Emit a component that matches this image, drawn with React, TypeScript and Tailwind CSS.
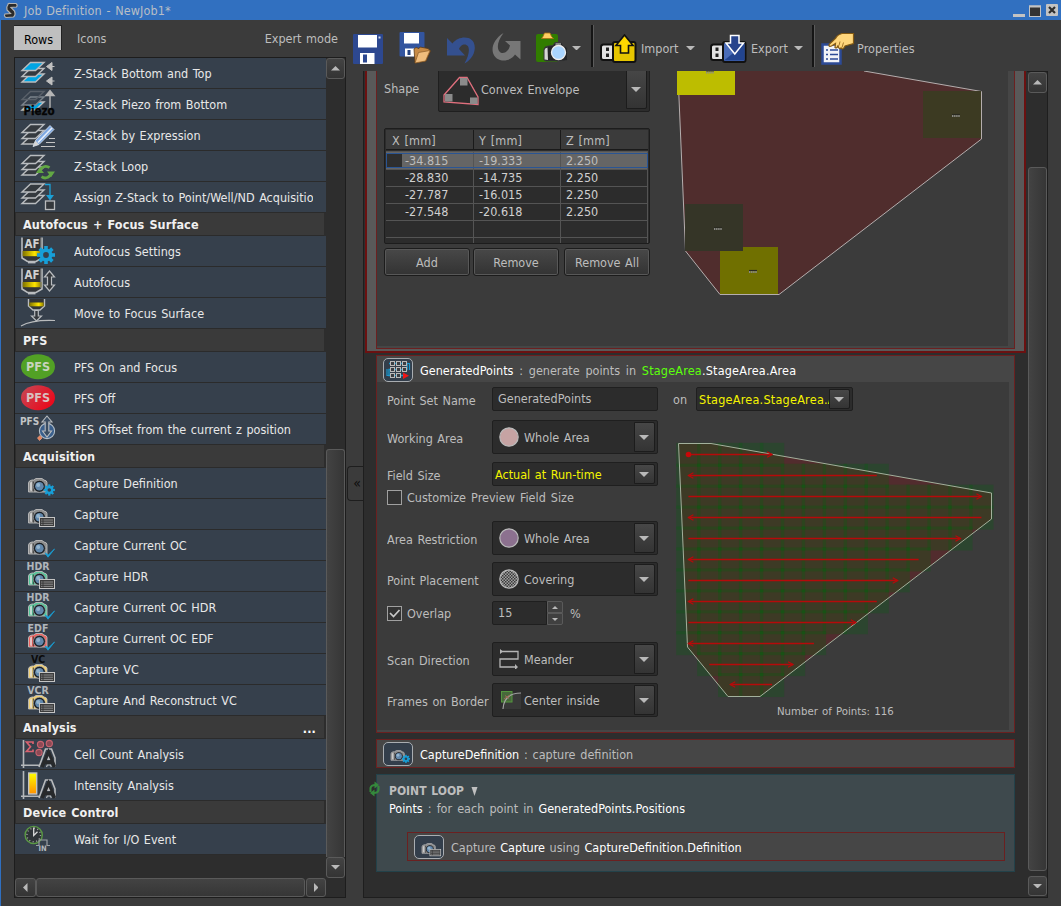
import React from "react";

type Kids = { children?: React.ReactNode };

const STROKE = "#b9bcbf";

/* ---------- shared glyphs ---------- */

function Gear({ cx, cy, r, hole = "#36404c" }: { cx: number; cy: number; r: number; hole?: string }) {
  return (
    <g transform={`translate(${cx} ${cy})`}>
      {[0, 45, 90, 135].map((a) => (
        <rect key={a} x={-r * 0.2} y={-r} width={r * 0.4} height={r * 2} fill="#179fd8" transform={`rotate(${a})`} />
      ))}
      <circle r={r * 0.72} fill="#179fd8" />
      <circle r={r * 0.32} fill={hole} />
    </g>
  );
}

function Layer({ y, fill = "none", stroke = STROKE }: { y: number; fill?: string; stroke?: string }) {
  return <path d={`M10.5 ${y}H24L15.5 ${y + 8}H2Z`} fill={fill} stroke={stroke} strokeWidth="1.4" />;
}

function TableBadge({ x, y }: { x: number; y: number }) {
  return (
    <g>
      <rect x={x + 0.5} y={y + 0.5} width="15" height="9" fill="#3c3c3c" stroke="#c4c4c4" />
      <path d={`M${x + 2} ${y + 3}h12M${x + 2} ${y + 5.2}h12M${x + 2} ${y + 7.4}h12`} stroke="#8c8c8c" strokeWidth="1" />
      <path d={`M${x + 4} ${y + 1.5}v7`} stroke="#333" strokeWidth="0.8" />
    </g>
  );
}

function Check({ x, y }: { x: number; y: number }) {
  return <path d={`M${x} ${y + 4.5}l3 4.2 6.5 -8.2 -6 5.8z`} fill="#189fd6" stroke="#189fd6" strokeWidth="0.8" />;
}

function CameraBody({ tint = "#8d8d8d" }: { tint?: string }) {
  return (
    <g transform="translate(0 0.5)">
      <path d="M8.5 23.5V14.5Q8.7 12 12 11.5H13.5L16 10H22L24 11.5Q27 12 27 14V23.5Z" fill={tint} stroke="#bdbdbd" strokeWidth="0.9" />
      <path d="M10 22V14.5Q10.4 13 12 13V22.5Z" fill="#e2e2e2" opacity="0.75" />
      <path d="M13.3 13V23" stroke="#333" strokeWidth="0.9" />
      <circle cx="19.4" cy="17.8" r="6" fill="#1b1f24" stroke="#b0b0b0" strokeWidth="0.6" />
      <circle cx="19.4" cy="17.8" r="4.3" fill="#6288ac" />
      <circle cx="18.2" cy="16.4" r="2" fill="#94b5cf" />
    </g>
  );
}

function Camera({ badge, tint, label, labelFill = "#b0b5ba" }: { badge: "gear" | "table" | "check"; tint?: string; label?: string; labelFill?: string }) {
  return (
    <g>
      <CameraBody tint={tint} />
      {badge === "gear" && <Gear cx={29.3} cy={22} r={5.6} />}
      {badge === "table" && <TableBadge x={19} y={18} />}
      {badge === "check" && <Check x={25} y={18.5} />}
      {label && (
        <text x="18" y="9" textAnchor="middle" fontSize="10.5" fontWeight="700" fill={labelFill} className="font-['DejaVu_Sans_Condensed','DejaVu_Sans',sans-serif]">
          {label}
        </text>
      )}
    </g>
  );
}

function Objective() {
  return (
    <g>
      <path d="M2 1.500V22L7.500 25.500H16L22 22V1.500" fill="#333537" stroke={STROKE} strokeWidth="1.600" />
      <path d="M8 26.500H15.500" stroke={STROKE} strokeWidth="1.800" />
      <rect x="2.600" y="15" width="18.800" height="5.200" fill="url(#band)" />
      <path d="M20.800 1.500V21" stroke="#77797b" strokeWidth="1" />
      <text x="12" y="12" textAnchor="middle" fontSize="11.500" fontWeight="700" fill="#d0d0d0" className="font-['DejaVu_Sans_Condensed','DejaVu_Sans',sans-serif]">
        AF
      </text>
    </g>
  );
}

function DoubleArrow({ x, y1, y2 }: { x: number; y1: number; y2: number }) {
  return (
    <path
      d={`M${x} ${y1}L${x + 5} ${y1 + 6}H${x + 2}V${y2 - 6}H${x + 5}L${x} ${y2}L${x - 5} ${y2 - 6}H${x - 2}V${y1 + 6}H${x - 5}Z`}
      fill="#34383c"
      stroke={STROKE}
      strokeWidth="1.2"
    />
  );
}

function Axis() {
  return <path d="M3.5 1V29M1 26.3H20" stroke="#b4b7ba" strokeWidth="1.6" fill="none" />;
}

function BigA() {
  return (
    <g>
      <path d="M19 28L25.500 10H31.500L35 19V28" fill="none" stroke="#b9bbbd" strokeWidth="1.600" />
      <path d="M22 28L28.500 13.500L34.500 28M24.500 23.500H33" fill="none" stroke="#27292b" strokeWidth="3.600" />
      <path d="M28.500 17L27 21H30.300Z" fill="#b9bbbd" />
      <path d="M26.500 28L27.300 26H30.500L31.300 28" fill="none" stroke="#b9bbbd" strokeWidth="1.200" />
    </g>
  );
}

function RowIcon({ kind }: { kind: string }) {
  const bold = "font-['DejaVu_Sans_Condensed','DejaVu_Sans',sans-serif] font-bold";
  const body: Record<string, React.ReactNode> = {
    zBottomTop: (
      <>
        <Layer y={16} fill="#00a5e3" /><Layer y={10.5} fill="#353a3f" /><Layer y={4.5} fill="#00a5e3" />
        <path d="M26.5 8.5L32 4.5V12.5ZM32 8.5H34.5M26.5 23L32 19V27ZM32 23H34.5" fill="#c0c0c0" stroke="#c0c0c0" />
      </>
    ),
    zPiezo: (
      <>
        <Layer y={13} fill="#00a5e3" /><Layer y={8} fill="#36404c" stroke="#7b838b" /><Layer y={2.5} stroke="#596069" />
        <path d="M30 19V4M26 6.5L30 1.5L34 6.5Z" stroke="#b5b5b5" strokeWidth="1.4" fill="#b5b5b5" />
        <text x="3.5" y="26.2" fontSize="11.5" className={bold} fill="#050505" stroke="#050505" strokeWidth="0.3" textLength="31">Piezo</text>
      </>
    ),
    zExpr: (
      <>
        <Layer y={16} fill="#353a3f" /><Layer y={10.5} fill="#353a3f" /><Layer y={4.5} fill="#353a3f" />
        <path d="M29 18.5H35M26 22.5H35M21 26.5H35" stroke="#c5c5c5" strokeWidth="1.2" />
        <path d="M13 26.5L15.5 20.5L30 5.5L34 9.5L19 24.5Z" fill="#7fa9e2" stroke="#dbe6f5" strokeWidth="0.8" />
        <path d="M18 22.5L32 8" stroke="#e8f0fa" strokeWidth="1.6" />
        <path d="M13 26.5L15.5 20.5L19 24.5Z" fill="#d5d5d5" />
      </>
    ),
    zLoop: (
      <>
        <Layer y={16} fill="#353a3f" /><Layer y={10.5} fill="#353a3f" /><Layer y={4.5} fill="#353a3f" />
        <path d="M19.5 21A6.3 6.3 0 0 1 29.5 16.7M31.500 21A6.3 6.3 0 0 1 21.5 25.700" fill="none" stroke="#62a744" strokeWidth="2.800" />
        <path d="M16 22L19.5 16.500L24 22ZM27 20.5L35 20.5L31.2 26Z" fill="#62a744" />
      </>
    ),
    zAssign: (
      <>
        <Layer y={13.5} fill="#353a3f" /><Layer y={8} fill="#353a3f" /><Layer y={2} fill="#353a3f" />
        <path d="M25 2.5H30V14" fill="none" stroke="#1ba0d6" strokeWidth="1.3" />
        <path d="M26 13H34L30 18.5Z" fill="#1ba0d6" />
        <rect x="25.5" y="19" width="9" height="8.5" fill="#34383c" stroke="#b9bbbd" strokeWidth="1.3" />
      </>
    ),
    afSet: (<><Objective /><Gear cx={26} cy={19} r={9} /></>),
    af: (<><Objective /><DoubleArrow x={29.5} y1={4} y2={24} /></>),
    moveFocus: (
      <>
        <path d="M8.5 1V8L13 12H20L24.5 8V1" fill="#333537" stroke={STROKE} strokeWidth="1.4" />
        <rect x="9.3" y="4.5" width="14.4" height="3.8" fill="url(#band)" />
        <path d="M14.7 12.5V18H11.5L16.5 23L21.5 18H18.3V12.5Z" fill="#34383c" stroke={STROKE} strokeWidth="1.2" />
        <path d="M1 28Q12 21.5 35 22.5" fill="none" stroke="#b9bbbd" strokeWidth="1.2" />
      </>
    ),
    pfsOn: (
      <>
        <ellipse cx="18" cy="14.7" rx="17" ry="12.5" fill="#52a125" />
        <text x="18" y="19" textAnchor="middle" fontSize="12.5" className={bold} fill="#c9d3bf">PFS</text>
      </>
    ),
    pfsOff: (
      <>
        <ellipse cx="18" cy="14.7" rx="17" ry="12.5" fill="url(#redBall)" />
        <text x="18" y="19" textAnchor="middle" fontSize="12.5" className={bold} fill="#d8c0c0">PFS</text>
      </>
    ),
    pfsOffset: (
      <>
        <circle cx="27" cy="17" r="7.6" fill="#3a5f8c" stroke="#b3bec8" strokeWidth="1.1" />
        <path d="M17.5 24L20 21.5L22 24L19.5 26.5Z" fill="#e8835c" stroke="#f0a484" strokeWidth="0.7" />
        <path d="M27 2L32 8H28.800V17H31.500L27 23L22.500 17H25.200V8H22Z" fill="#3a4d63" stroke={STROKE} strokeWidth="1.100" />
        <text x="0" y="11" fontSize="10" className={bold} fill="#c2c4c6">PFS</text>
      </>
    ),
    capDef: <Camera badge="gear" />,
    cap: <Camera badge="table" />,
    capOC: <Camera badge="check" />,
    capHDR: <Camera badge="table" tint="#55c79a" label="HDR" />,
    capOCHDR: <Camera badge="check" tint="#55c79a" label="HDR" />,
    capEDF: <Camera badge="check" tint="#f0625f" label="EDF" />,
    capVC: <Camera badge="table" tint="#f0cf72" label="VC" labelFill="#0b0b0b" />,
    capVCR: <Camera badge="table" tint="#f0cf72" label="VCR" />,
    cell: (
      <>
        <Axis />
        <path d="M13 5V3H6.5L10.5 7.8L6.5 12.5H13V10.5" fill="none" stroke="#d8626f" strokeWidth="1.7" />
        <g fill="#8c4a55" stroke="#c8626e" strokeWidth="1.1">
          <circle cx="20.5" cy="5.5" r="3.1" /><circle cx="29.3" cy="4.5" r="3.1" /><circle cx="19" cy="13.5" r="3.1" />
        </g>
        <BigA />
      </>
    ),
    intensity: (<><Axis /><rect x="8.7" y="3" width="8" height="21" fill="url(#heat)" stroke="#c3c3c3" strokeWidth="1.4" /><BigA /></>),
    wait: (
      <>
        <circle cx="13.7" cy="11" r="8.6" fill="#2f3438" stroke="#5b9a45" strokeWidth="1.4" />
        <circle cx="13.7" cy="11" r="6.8" fill="none" stroke="#a9a9a9" strokeWidth="1.4" strokeDasharray="1 2.56" />
        <path d="M13.7 3.5V11.5L17.5 7.8" fill="none" stroke="#d9d9d9" strokeWidth="1.3" />
        <path d="M16 21.500H19V16H27V21.500H30" fill="none" stroke="#9b9fa3" strokeWidth="1.2" />
        <text x="18.500" y="27.300" fontSize="7.500" className={bold} fill="#b5b8bb">IN</text>
      </>
    ),
  };
  return (
    <svg width="36" height="30" viewBox="0 0 36 30" className="ml-[5px] shrink-0">
      {body[kind]}
    </svg>
  );
}

/* ---------- left list ---------- */

type Group = { title?: string; more?: boolean; rows: [string, string][] };

const groups: Group[] = [
  {
    rows: [
      ["zBottomTop", "Z-Stack Bottom and Top"],
      ["zPiezo", "Z-Stack Piezo from Bottom"],
      ["zExpr", "Z-Stack by Expression"],
      ["zLoop", "Z-Stack Loop"],
      ["zAssign", "Assign Z-Stack to Point/Well/ND Acquisition"],
    ],
  },
  { title: "Autofocus + Focus Surface", rows: [["afSet", "Autofocus Settings"], ["af", "Autofocus"], ["moveFocus", "Move to Focus Surface"]] },
  { title: "PFS", rows: [["pfsOn", "PFS On and Focus"], ["pfsOff", "PFS Off"], ["pfsOffset", "PFS Offset from the current z position"]] },
  {
    title: "Acquisition",
    rows: [
      ["capDef", "Capture Definition"],
      ["cap", "Capture"],
      ["capOC", "Capture Current OC"],
      ["capHDR", "Capture HDR"],
      ["capOCHDR", "Capture Current OC HDR"],
      ["capEDF", "Capture Current OC EDF"],
      ["capVC", "Capture VC"],
      ["capVCR", "Capture And Reconstruct VC"],
    ],
  },
  { title: "Analysis", more: true, rows: [["cell", "Cell Count Analysis"], ["intensity", "Intensity Analysis"]] },
  { title: "Device Control", rows: [["wait", "Wait for I/O Event"]] },
];

function Tri({ dir, w = 10, fill = "#b9b9b9" }: { dir: "up" | "down" | "left" | "right"; w?: number; fill?: string }) {
  const h = w / 2;
  const pts = {
    down: `0,0 ${w},0 ${h},${h}`,
    up: `0,${h} ${w},${h} ${h},0`,
    left: `${h},0 ${h},${w} 0,${h}`,
    right: `0,0 0,${w} ${h},${h}`,
  }[dir];
  const vertical = dir === "up" || dir === "down";
  return (
    <svg width={vertical ? w : h} height={vertical ? h : w} className="shrink-0">
      <polygon points={pts} fill={fill} />
    </svg>
  );
}

function ScrollButton({ dir, className }: { dir: "up" | "down" | "left" | "right"; className: string }) {
  return (
    <div className={`flex shrink-0 items-center justify-center rounded-[3px] border border-[#5a5a5a] bg-linear-to-b from-[#434343] to-[#343434] ${className}`}>
      <Tri dir={dir} w={9} />
    </div>
  );
}

function LeftPanel() {
  return (
    <div className="flex w-[346px] shrink-0 flex-col pr-px pl-[13px]">
      <div className="flex h-[37px] items-start pt-[5px]">
        <div className="flex h-[25px] w-[48px] items-center justify-center border-t border-r border-[#222] bg-[#bfbfbf] pt-[2px] pl-[2px] text-black">Rows</div>
        <div className="ml-[15px] pt-[6px]">Icons</div>
        <div className="ml-auto pt-[6px] pr-[8px]">Expert mode</div>
      </div>
      <div className="flex h-[841px] flex-col border border-[#1d1d1d] bg-[#2d2d2d]">
        <div className="flex h-[820px]">
          <div className="w-[311px] shrink-0 overflow-hidden">
            {groups.map((g, i) => (
              <div key={i}>
                {g.title && (
                  <div className="mr-[2px] ml-px flex h-[23px] items-center justify-between border-b border-[#2b2b2b] bg-[#3a3a3a] pr-2 pl-[7px] font-bold tracking-[0.12px] text-[#f0f0f0]">
                    <span>{g.title}</span>
                    {g.more && <span className="pt-[3px] text-white">...</span>}
                  </div>
                )}
                {g.rows.map(([k, label]) => (
                  <div key={k} className="flex h-[31px] items-center border-b border-[#2b2b2b] bg-[#36404c]">
                    <RowIcon kind={k} />
                    <span className="ml-[18px] w-[239px] overflow-hidden whitespace-nowrap text-[#e8e8e8]">{label}</span>
                  </div>
                ))}
              </div>
            ))}
          </div>
          <div className="flex w-[19px] shrink-0 flex-col">
            <ScrollButton dir="up" className="h-[21px] w-[19px]" />
            <div className="mt-[370px] h-[408px] rounded-t-[3px] border border-b-0 border-[#5a5a5a] bg-linear-to-r from-[#434343] to-[#363636]" />
            <ScrollButton dir="down" className="h-[21px] w-[19px]" />
          </div>
        </div>
        <div className="flex h-[19px]">
          <ScrollButton dir="left" className="h-[19px] w-[21px]" />
          <div className="h-[19px] w-[269px] rounded-[3px] border border-[#5a5a5a] bg-linear-to-b from-[#434343] to-[#363636]" />
          <ScrollButton dir="right" className="ml-px h-[19px] w-[20px]" />
        </div>
      </div>
    </div>
  );
}

/* ---------- toolbar ---------- */

function Separator({ className }: { className: string }) {
  return <div className={`-mt-[4px] h-[42px] w-[3px] shrink-0 border-r border-l-2 border-r-[#5c5c5c] border-l-[#151515] ${className}`} />;
}

function Toolbar() {
  return (
    <div className="flex h-[51px] shrink-0 items-center pt-[5px]">
      <svg width="30" height="30" viewBox="0 0 30 30" className="mt-[2px] ml-[6px] shrink-0">
        <rect width="30" height="30" rx="1" fill="#2d4890" />
        <rect x="5" y="1" width="19" height="12.5" fill="#fff" />
        <rect x="25.5" y="2.5" width="2" height="2" fill="#cfd8ea" />
        <rect x="7" y="19" width="14.5" height="11" fill="#fff" />
        <rect x="10" y="20.5" width="4" height="8" fill="#2d4890" />
      </svg>
      <svg width="32" height="32" viewBox="0 0 32 32" className="-mt-[1px] ml-[16px] shrink-0">
        <rect x="0.5" width="25" height="24.5" rx="1" fill="#33559f" />
        <rect x="5" y="1" width="15" height="10.5" fill="#fff" />
        <rect x="6" y="16.5" width="12" height="8" fill="#fff" />
        <rect x="8.5" y="18" width="3" height="5" fill="#24427f" />
        <path d="M15 17L17 15.5L20 16.5L21 15L29 16.5L31.5 19L27 29L16 31Z" fill="#c88b45" stroke="#5b3a18" strokeWidth="0.8" />
        <path d="M16 31L19.5 20.5L31 18.5L26.5 29Z" fill="#f0bd7c" stroke="#8a5b28" strokeWidth="0.7" />
      </svg>
      <svg width="30" height="28" viewBox="0 0 30 28" className="mt-[3px] ml-[15px] shrink-0">
        <path d="M1 2L6.5 7.5C13 -1 29 -1 28.8 12C28.5 20 23 25 18.5 27.5C24.5 17 24.5 7.5 17.5 8.5C15 9 13.5 11.5 13 13L19 19.5H1Z" fill="#34508f" />
      </svg>
      <svg width="29" height="28" viewBox="0 0 29 28" className="-mt-[3px] ml-[16px] shrink-0">
        <path d="M11.5 0C-3 9 -2 24 8 27C15 29 21 25 23 21.500L28.500 26.500V8H13L18 12.500C17 18 11 22.500 7.500 18.500C4.500 15 5.500 8 11.500 0Z" fill="#777" />
      </svg>
      <svg width="33" height="30" viewBox="0 0 33 30" className="-mt-[2px] ml-[15px] shrink-0">
        <rect y="2" width="22" height="28" rx="2" fill="#317d00" />
        <path d="M5.500 6.500L7 4.500L8.500 1H14L15.500 4.500L17.500 6.500Z" fill="#ffce62" stroke="#a86e13" strokeWidth="0.800" />
        <path d="M8 28V17Q9 14 12.500 14L17 13.500L19 10.500H25.500L27.500 14Q31.500 14.500 31.500 17V27.500Q31 29 28 29H10Z" fill="#222427" stroke="#3b3b3b" />
        <path d="M19.500 12H25" stroke="#a9a9a9" strokeWidth="1.500" />
        <path d="M8.500 27.500V18Q9 15.500 11.500 15.500L12 28Z" fill="#d6d6d6" />
        <circle cx="22.500" cy="20.500" r="7" fill="#a9d5ff" stroke="#eee" strokeWidth="1.300" />
      </svg>
      <div className="ml-[3px]"><Tri dir="down" w={9} /></div>
      <Separator className="ml-[10px]" />
      <svg width="37" height="30" viewBox="0 0 37 30" className="mt-[2px] ml-[6px] shrink-0">
        <path d="M13 10.500H3.500Q1 10.500 1 13V23.500Q1 26 3.500 26H13Z" fill="#e2e2e2" stroke="#111" strokeWidth="2" />
        <path d="M6 13.500h3v3.500H6zM6 19.500h3v3.500H6z" fill="#222" />
        <rect x="13" y="8" width="22.500" height="20" rx="2" fill="#e6c500" stroke="#111" strokeWidth="2" />
        <path d="M24.500 1L33 11.500H28.500V19H20.500V11.500H16Z" fill="#ffd800" stroke="#111" strokeWidth="1.600" />
      </svg>
      <span className="ml-[4px] w-[40px] whitespace-nowrap">Import</span>
      <div className="ml-[5px]"><Tri dir="down" w={9} /></div>
      <svg width="37" height="30" viewBox="0 0 37 30" className="mt-[2px] ml-[15px] shrink-0">
        <path d="M13 10.500H3.500Q1 10.500 1 13V23.500Q1 26 3.500 26H13Z" fill="#e2e2e2" stroke="#111" strokeWidth="2" />
        <path d="M5.500 13.500h3v3.500h-3zM5.500 19.500h3v3.500h-3z" fill="#222" />
        <rect x="13" y="8" width="22.500" height="20" rx="2" fill="#4a6cb8" stroke="#111" strokeWidth="2" />
        <path d="M14 26.500H34.500V10Z" fill="#22448f" />
        <path d="M20.500 1.500H29V9H33.500L24.800 20L16 9H20.500Z" fill="#28448c" stroke="#fff" strokeWidth="1.500" />
      </svg>
      <span className="ml-[4px] w-[38px] whitespace-nowrap">Export</span>
      <div className="ml-[5px]"><Tri dir="down" w={9} /></div>
      <Separator className="ml-[9px]" />
      <svg width="34" height="33" viewBox="0 0 34 33" className="ml-[6px] shrink-0">
        <rect x="1.500" y="12.500" width="18" height="19" fill="#f1f3f8" stroke="#2d4b97" strokeWidth="2.500" />
        <path d="M5 18h2M5 22.500h2M5 27h2M9 18h8M9 22.500h8M9 27h8" stroke="#2d4b97" strokeWidth="1.600" />
        <path d="M32.500 1.500H21Q16 3 14.500 6.500L8 12.500Q7.500 15 10.500 14L14.500 11.500L14 15.500Q16 17 17 13.500Q18 18 20 16Q20.500 17.500 22.500 16.500L24 14L32.500 11.500Z" fill="#ffd67c" stroke="#845a13" strokeWidth="1.200" />
        <path d="M19 9.500L18 13.500M22.500 10.500L21 15.500" stroke="#9b6d20" strokeWidth="0.900" />
      </svg>
      <span className="ml-[2px] tracking-[0.1px]">Properties</span>
    </div>
  );
}

/* ---------- form controls ---------- */

function Select({ className, children, buttonClass = "" }: Kids & { className: string; buttonClass?: string }) {
  return (
    <div className={`flex shrink-0 items-stretch overflow-hidden rounded-[2px] border border-[#1f1f1f] bg-[#2c2c2c] py-px pr-[2px] pl-px ${className}`}>
      <div className="flex min-w-0 flex-1 items-center overflow-hidden whitespace-nowrap">{children}</div>
      <div className={`flex w-[21px] shrink-0 items-center justify-center rounded-r-[2px] border border-[#1c1c1c] bg-linear-to-b from-[#474747] to-[#343434] pr-px ${buttonClass}`}>
        <Tri dir="down" />
      </div>
    </div>
  );
}

function FormRow({ label, className, children }: Kids & { label: string; className: string }) {
  return (
    <div className={`flex items-center ${className}`}>
      <div className="w-[105px] shrink-0 overflow-hidden pt-[2px] whitespace-nowrap">{label}</div>
      {children}
    </div>
  );
}

function Box({ checked }: { checked?: boolean }) {
  return (
    <svg width="15" height="15" className="shrink-0">
      <rect x="0.500" y="0.500" width="14" height="14" fill="#333" stroke="#a0a0a0" />
      {checked && <path d="M3 7L6.500 10.500L12.500 4" fill="none" stroke="#c9c9c9" strokeWidth="1.700" />}
    </svg>
  );
}

function Disc({ fill }: { fill: string }) {
  return (
    <svg width="20" height="20" className="mr-[5px] ml-[5px] shrink-0">
      <circle cx="10" cy="10" r="9.200" fill={fill} stroke="#b9b9b9" strokeWidth="1.200" />
    </svg>
  );
}

function Chip({ children }: Kids) {
  return (
    <div className="flex h-[24px] w-[30px] shrink-0 items-center justify-center overflow-hidden rounded-[5px] border border-[#a9adb1] bg-[#333e4b]">
      {children}
    </div>
  );
}

/* ---------- previews ---------- */

function AreaPreview() {
  const tags = [[30, 1.5], [276, 45], [38, 158], [73, 201]];
  return (
    <svg width="308" height="226" viewBox="0 0 308 226" className="shrink-0">
      <path d="M1 -20L9.500 180L44 223.500H103L305.500 68V20.500L188 0V-20Z" fill="#502d2d" stroke="#b5aeae" strokeWidth="1" />
      <rect x="1" y="0" width="58" height="24" fill="#bdbd00" />
      <rect x="247" y="20" width="58" height="47" fill="#3c3a22" />
      <rect x="44" y="176" width="58" height="47" fill="#707000" />
      <rect x="9" y="133" width="58" height="47" fill="#353527" />
      {tags.map(([x, y], i) => (
        <g key={i}>
          <path d={`M${x} ${y - 1.5}h8`} stroke="#2a2a20" strokeWidth="1.200" />
          <path d={`M${x} ${y}h8`} stroke="#8a8a86" strokeWidth="2.200" strokeDasharray="1.400 0.700" />
        </g>
      ))}
    </svg>
  );
}

const PITCH = 20.93;
const scan: { from: number; count: number }[] = [
  { from: 0, count: 5 }, { from: 0, count: 10 }, { from: 0, count: 15 }, { from: 0, count: 15 },
  { from: 0, count: 14 }, { from: 0, count: 12 }, { from: 0, count: 11 }, { from: 0, count: 10 },
  { from: 0, count: 9 }, { from: 0, count: 7 }, { from: 1, count: 5 }, { from: 2, count: 3 },
];

function PointsPreview() {
  const outline = "M2.500 2.500H35L315.500 52V78L84 255.500H52L11.500 206Z";
  return (
    <svg width="320" height="258" viewBox="0 0 320 258" className="shrink-0">
      <path d={outline} fill="#522c2e" />
      {scan.flatMap((r, row) =>
        Array.from({ length: r.count }, (_, i) => (
          <rect
            key={`${row}-${i}`}
            x={(r.from + i) * PITCH + 0.2}
            y={row * PITCH + 1.8}
            width="24.3"
            height="24"
            fill="rgb(0,98,10)"
            fillOpacity="0.25"
          />
        ))
      )}
      <path d={outline} fill="none" stroke="#a3b09c" strokeWidth="1" />
      {scan.map((r, row) => {
        const x1 = r.from * PITCH + 12.4;
        const x2 = (r.from + r.count - 1) * PITCH + 12.4;
        const y = Math.round(row * PITCH + 13.2) + 0.5;
        const tip = row % 2 === 0 ? x2 : x1;
        const d = row % 2 === 0 ? -5 : 5;
        return (
          <g key={row} stroke="#b70a0a" fill="none">
            <path d={`M${x1} ${y}H${x2}`} strokeWidth="1.4" />
            <path d={`M${tip + d} ${y - 2.8}L${tip} ${y}L${tip + d} ${y + 2.8}`} strokeWidth="1.2" />
          </g>
        );
      })}
      <circle cx="12.5" cy="13.5" r="2.8" fill="#c80808" />
    </svg>
  );
}

/* ---------- cards ---------- */

const points = [
  ["-34.815", "-19.333", "2.250"],
  ["-28.830", "-14.735", "2.250"],
  ["-27.787", "-16.015", "2.250"],
  ["-27.548", "-20.618", "2.250"],
  ["", "", ""],
];

function PointTable() {
  return (
    <div className="h-[116px] w-[266px] overflow-hidden rounded-[2px] border border-[#1d1d1d] bg-[#2c2c2c] px-px pt-px">
      <div className="flex h-[20px] border-b border-[#1a1a1a] bg-[#3b3b3b] tracking-[0.15px]">
        <div className="w-[88px] border-r border-[#1a1a1a] pt-[3px] pl-[6px]">X [mm]</div>
        <div className="w-[87px] border-r border-[#1a1a1a] pt-[3px] pl-[5px]">Y [mm]</div>
        <div className="flex-1 pt-[3px] pl-[5px]">Z [mm]</div>
      </div>
      <div className="h-[2px] border-b border-[#545454]" />
      {points.map((p, i) => (
        <div key={i} className={`relative flex items-center border-b border-[#545454] pb-px ${i === 0 ? "h-[18px] bg-[#656565]" : "h-[17px] text-[#d0d0d0]"}`}>
          <div className="flex h-[17px] w-[88px] items-center border-r border-[#545454]">
            {i === 0 && <span className="-mr-[16px] ml-px h-[15px] w-[15px] bg-[#2e2e2e]" />}
            <span className="pl-[19px]">{p[0]}</span>
          </div>
          <div className="flex h-[17px] w-[87px] items-center border-r border-[#545454] pl-[5px]">{p[1]}</div>
          <div className="flex h-[17px] flex-1 items-center border-r border-[#545454] pl-[5px]">{p[2]}</div>
          {i === 0 && <div className="absolute inset-x-0 inset-y-px border border-[#2a5594]" />}
        </div>
      ))}
      <div className="flex h-[6px]">
        <div className="w-[88px] border-r border-[#545454]" />
        <div className="w-[87px] border-r border-[#545454]" />
        <div className="flex-1 border-r border-[#545454]" />
      </div>
    </div>
  );
}

function Button({ className, children }: Kids & { className: string }) {
  return (
    <div className={`flex h-[28px] items-center justify-center rounded-[3px] border border-[#1c1c1c] bg-linear-to-b from-[#484848] to-[#333] inset-ring inset-ring-[#585858] ${className}`}>
      {children}
    </div>
  );
}

function StageAreaCard() {
  return (
    <div className="ml-px h-[282px] w-[661px] shrink-0 border-2 border-t-0 border-[#6b1111] bg-[#595959] px-[9px] pb-[2px]">
      <div className="h-full border border-t-0 border-[#6b2020] bg-[#464646] pr-[6px] pb-[2px]">
        <div className="flex h-full bg-[#3b3b3b]">
          <div className="w-[299px] shrink-0 pl-[7px]">
            <div className="flex h-[41px] items-start">
              <span className="w-[54px] pt-[10px]">Shape</span>
              <div className="h-[41px] w-[212px] overflow-hidden">
                <Select className="-mt-[4px] h-[45px] w-[212px]" buttonClass="mb-px">
                  <svg width="36" height="34" viewBox="0 0 36 34" className="mr-[2px] ml-[3px] shrink-0">
                    <path d="M1 22L16.500 4.500H24L35 24V31.500L1 29Z" fill="none" stroke="#e06f7d" strokeWidth="1.300" />
                    <path d="M17 5h7.500v7.500H17zM2 21h7.500v7.500H2zM27 24.500h7.500V31H27z" fill="#8b8b8b" />
                  </svg>
                  <span>Convex Envelope</span>
                </Select>
              </div>
            </div>
            <div className="mt-[16px]"><PointTable /></div>
            <div className="mt-[4px] flex">
              <Button className="w-[86px]">Add</Button>
              <Button className="ml-[3px] w-[86px]">Remove</Button>
              <Button className="ml-[5px] w-[86px]">Remove All</Button>
            </div>
          </div>
          <AreaPreview />
        </div>
      </div>
    </div>
  );
}

function GeneratedPointsCard() {
  return (
    <div className="mt-[2px] ml-[12px] h-[378px] w-[639px] shrink-0 border border-[#6b2020] bg-[#464646] pr-[5px] pb-[2px]">
      <div className="flex h-[26px] items-center pt-px pl-[6px]">
        <Chip>
          <svg width="28" height="22" viewBox="0 0 28 22">
            <path d="M5 4.500H23V10.500H5V16.500H20" fill="none" stroke="#1b96cc" strokeWidth="1.400" />
            <path d="M3 10V16.500H6M23 4.500H25.500V11" fill="none" stroke="#1b96cc" strokeWidth="1.200" />
            <g fill="#3a3d42" stroke="#b9b9b9">
              {[5, 11, 17].map((y) => [6, 12, 18].filter((x) => !(y === 17 && x === 18)).map((x) => <rect key={`${x}${y}`} x={x + 0.5} y={y - 2.5} width="4" height="4" />))}
            </g>
            <path d="M19 13.500L25 16.800L19 20Z" fill="#f01616" />
          </svg>
        </Chip>
        <span className="ml-[7px] pt-[2px] whitespace-pre [word-spacing:2.2px]">
          <span className="text-white">GeneratedPoints</span> : generate points in{" "}
          <span className="tracking-[0.2px] text-[#5cff0c]">StageArea</span>
          <span className="tracking-[0.2px] text-white">.StageArea.Area</span>
        </span>
      </div>
      <div className="flex h-[348px] bg-[#3b3b3b] pl-[10px]">
        <div className="w-[271px] shrink-0 pt-[5px]">
          <FormRow label="Point Set Name" className="h-[24px]">
            <div className="h-[24px] w-[166px] rounded-[2px] border border-[#1f1f1f] bg-[#2c2c2c] pt-[3px] pl-[5px] leading-[16px]">GeneratedPoints</div>
          </FormRow>
          <FormRow label="Working Area" className="mt-[9px] h-[34px]">
            <Select className="h-[34px] w-[166px]"><Disc fill="#c6a3a3" />Whole Area</Select>
          </FormRow>
          <FormRow label="Field Size" className="mt-[8px] h-[24px]">
            <Select className="h-[24px] w-[166px]"><span className="pl-px text-[#f4f400]">Actual at Run-time</span></Select>
          </FormRow>
          <div className="flex h-[23px] items-center gap-[5px]"><Box /><span className="[word-spacing:1.5px]">Customize Preview Field Size</span></div>
          <FormRow label="Area Restriction" className="mt-[12px] h-[34px]">
            <Select className="h-[34px] w-[166px]"><Disc fill="#8c718f" />Whole Area</Select>
          </FormRow>
          <FormRow label="Point Placement" className="mt-[7px] h-[34px]">
            <Select className="h-[34px] w-[166px]"><Disc fill="url(#mesh)" />Covering</Select>
          </FormRow>
          <div className="mt-[5px] flex h-[24px] items-center">
            <Box checked />
            <span className="ml-[5px] w-[85px] pt-px">Overlap</span>
            <div className="h-[24px] w-[55px] rounded-l-[2px] border border-[#1f1f1f] bg-[#2c2c2c] pt-[3px] pl-[5px] leading-[16px]">15</div>
            <div className="flex h-[24px] w-[16px] flex-col">
              <div className="flex flex-1 items-center justify-center rounded-tr-[2px] border border-[#5a5a5a] bg-[#404040]"><Tri dir="up" w={6} /></div>
              <div className="flex flex-1 items-center justify-center rounded-br-[2px] border border-[#5a5a5a] bg-[#404040]"><Tri dir="down" w={6} /></div>
            </div>
            <span className="ml-[7px] pt-px">%</span>
          </div>
          <FormRow label="Scan Direction" className="mt-[17px] h-[34px]">
            <Select className="h-[34px] w-[166px]">
              <svg width="20" height="20" className="mx-[5px] shrink-0">
                <path d="M1 2.500H19V10H1V18H17" fill="none" stroke="#b5b5b5" strokeWidth="1.300" />
                <path d="M1 0L4 2.500L1 5ZM16 15L19 18L16 21Z" fill="#b5b5b5" />
              </svg>
              Meander
            </Select>
          </FormRow>
          <FormRow label="Frames on Border" className="mt-[7px] h-[34px]">
            <Select className="h-[34px] w-[166px]">
              <svg width="20" height="20" className="mr-[3px] ml-[7px] shrink-0">
                <path d="M3 19Q3 3 20 3V19Z" fill="#383838" />
                <rect x="0.500" y="1.500" width="10.500" height="10.500" fill="#47693a" stroke="#55963f" />
                <path d="M2 19Q3 3 20 3" fill="none" stroke="#a3a3a3" strokeWidth="1.200" />
                <path d="M3 9L9 5M4 5.500L8 8.500" stroke="#a06a58" />
              </svg>
              Center inside
            </Select>
          </FormRow>
        </div>
        <div className="flex flex-1 flex-col pt-[5px]">
          <div className="flex h-[24px] items-center pl-[15px]">
            <span className="w-[23px] pt-px">on</span>
            <Select className="h-[24px] w-[157px]"><span className="w-[131px] overflow-hidden pl-px tracking-[0.25px] text-[#f4f400]">StageArea.StageArea.Area</span></Select>
          </div>
          <div className="mt-[30px] ml-[18px]"><PointsPreview /></div>
          <div className="mt-[5px] ml-[119px] text-[11.3px] whitespace-nowrap">Number of Points: 116</div>
        </div>
      </div>
    </div>
  );
}

function RightPanel() {
  return (
    <div className="flex min-w-0 flex-1 flex-col">
      <Toolbar />
      <div className="flex h-[827px]">
        <div className="w-[16px] shrink-0 pt-[395px]">
          <div className="flex h-[35px] w-[16px] items-center justify-center rounded-l-[4px] border border-r-0 border-[#1e1e1e] pl-[3px] text-[14px] text-[#0c0c0c]">«</div>
        </div>
        <div className="flex w-[685px] overflow-hidden border border-t-0 border-[#1e1e1e] bg-[#2d2d2d]">
          <div className="flex w-[663px] shrink-0 flex-col">
            <StageAreaCard />
            <GeneratedPointsCard />
            <div className="mt-[6px] ml-[12px] flex h-[29px] w-[639px] shrink-0 items-center border border-[#6b2020] bg-[#464646] pl-[6px]">
              <Chip><svg width="28" height="22" viewBox="-1.2 0 38.9 30.5"><Camera badge="gear" /></svg></Chip>
              <span className="ml-[7px] pt-[2px] whitespace-pre [word-spacing:1.2px]"><span className="text-white">CaptureDefinition</span> : capture definition</span>
            </div>
            <div className="relative mt-[6px] ml-[12px] h-[98px] w-[639px] shrink-0 border border-[#23424a] bg-[#3e494d] pt-[8px] pl-[12px]">
              <svg width="14" height="16" viewBox="0 0 14 16" className="absolute top-[6px] -left-[9px]">
                <path d="M2.500 11V7Q3 4 7.500 4M10.500 5V9Q10 12 5.500 12" fill="none" stroke="#35893c" strokeWidth="2" />
                <path d="M6.500 0.500L11 4L6.500 7.500ZM6.500 8.500L2 12L6.500 15.500Z" fill="#35893c" />
              </svg>
              <div className="flex h-[16px] items-center pt-px text-[12px] font-bold">
                POINT LOOP
                <svg width="7" height="9" className="ml-[7px]"><path d="M0.5 0H6.5L3.5 9Z" fill="#c0c0c0" /></svg>
              </div>
              <div className="h-[18px] pt-[2px] whitespace-pre [word-spacing:1.5px]"><span className="text-white">Points</span> : for each point in <span className="text-white">GeneratedPoints.Positions</span></div>
              <div className="mt-[15px] ml-[18px] flex h-[29px] w-[598px] items-center border border-[#6b2020] bg-[#464646] pl-[6px]">
                <Chip><svg width="28" height="22" viewBox="-1.2 0 38.9 30.5"><Camera badge="table" /></svg></Chip>
                <span className="ml-[7px] pt-[2px] whitespace-pre">Capture <span className="text-white">Capture</span> using <span className="text-white">CaptureDefinition.Definition</span></span>
              </div>
            </div>
          </div>
          <div className="flex w-[20px] flex-col border-t border-[#1e1e1e] pl-px">
            <ScrollButton dir="up" className="h-[21px] w-[19px]" />
            <div className="mt-[74px] h-[704px] w-[19px] rounded-[3px] border border-[#5a5a5a] bg-linear-to-r from-[#434343] to-[#363636]" />
            <ScrollButton dir="down" className="mt-[5px] h-[20px] w-[19px]" />
          </div>
        </div>
      </div>
    </div>
  );
}

export default function App() {
  return (
    <div className="flex h-[906px] w-[1061px] flex-col overflow-hidden bg-[#3b3b3b] font-['DejaVu_Sans_Condensed','DejaVu_Sans',sans-serif] text-[12.5px] leading-[15px] text-[#bdbdbd] [font-stretch:condensed] [word-spacing:1px]">
      <svg width="0" height="0" className="absolute">
        <defs>
          <linearGradient id="band"><stop offset="0" stopColor="#7d7000" /><stop offset="0.65" stopColor="#ffe600" /><stop offset="1" stopColor="#8c7c00" /></linearGradient>
          <linearGradient id="heat" x2="0" y2="1"><stop offset="0" stopColor="#ffff00" /><stop offset="1" stopColor="#ff9000" /></linearGradient>
          <linearGradient id="redBall" y2="0.6"><stop offset="0" stopColor="#c44a57" /><stop offset="1" stopColor="#ea0a1c" /></linearGradient>
          <pattern id="mesh" width="3" height="3" patternUnits="userSpaceOnUse"><rect width="3" height="3" fill="#a0a0a0" /><rect width="1.5" height="1.5" fill="#3a3a3a" /><rect x="1.5" y="1.5" width="1.5" height="1.5" fill="#3a3a3a" /></pattern>
        </defs>
      </svg>
      <div className="flex h-[20px] shrink-0 items-center bg-[#3170c0] pl-[3px]">
        <svg width="16" height="17" viewBox="0 0 16 17" className="shrink-0">
          <path d="M5 2.500Q5 1 7 1.500L13 1.500Q15 3 13.500 5L8 5.500L11.500 9Q13 13 10.500 15L3 15.500Q0.500 14 2 12L7.500 11.500L4 8Q3 5 5 2.500Z" fill="#2b2b2b" stroke="#b3b3b3" strokeWidth="1.200" />
        </svg>
        <span className="ml-[5px] pt-px tracking-[0.1px] text-[#b8bec6]">Job Definition - NewJob1*</span>
        <svg width="46" height="15" viewBox="0 0 46 15" className="mt-[1px] mr-[2px] ml-auto shrink-0">
          <rect x="0" y="11" width="12" height="3" fill="#c3c3c3" />
          <rect x="16.500" y="3" width="11" height="10.500" fill="#333" stroke="#c3c3c3" /><path d="M16 3.500H28" stroke="#c3c3c3" strokeWidth="2" />
          <rect x="33" y="1" width="12" height="12" rx="1" fill="#c3c3c3" />
          <path d="M36 4L42 10M42 4L36 10" stroke="#2d2d2d" strokeWidth="2.200" />
        </svg>
      </div>
      <div className="flex h-[886px] border-l border-[#2f6fc0]">
        <LeftPanel />
        <RightPanel />
      </div>
    </div>
  );
}
